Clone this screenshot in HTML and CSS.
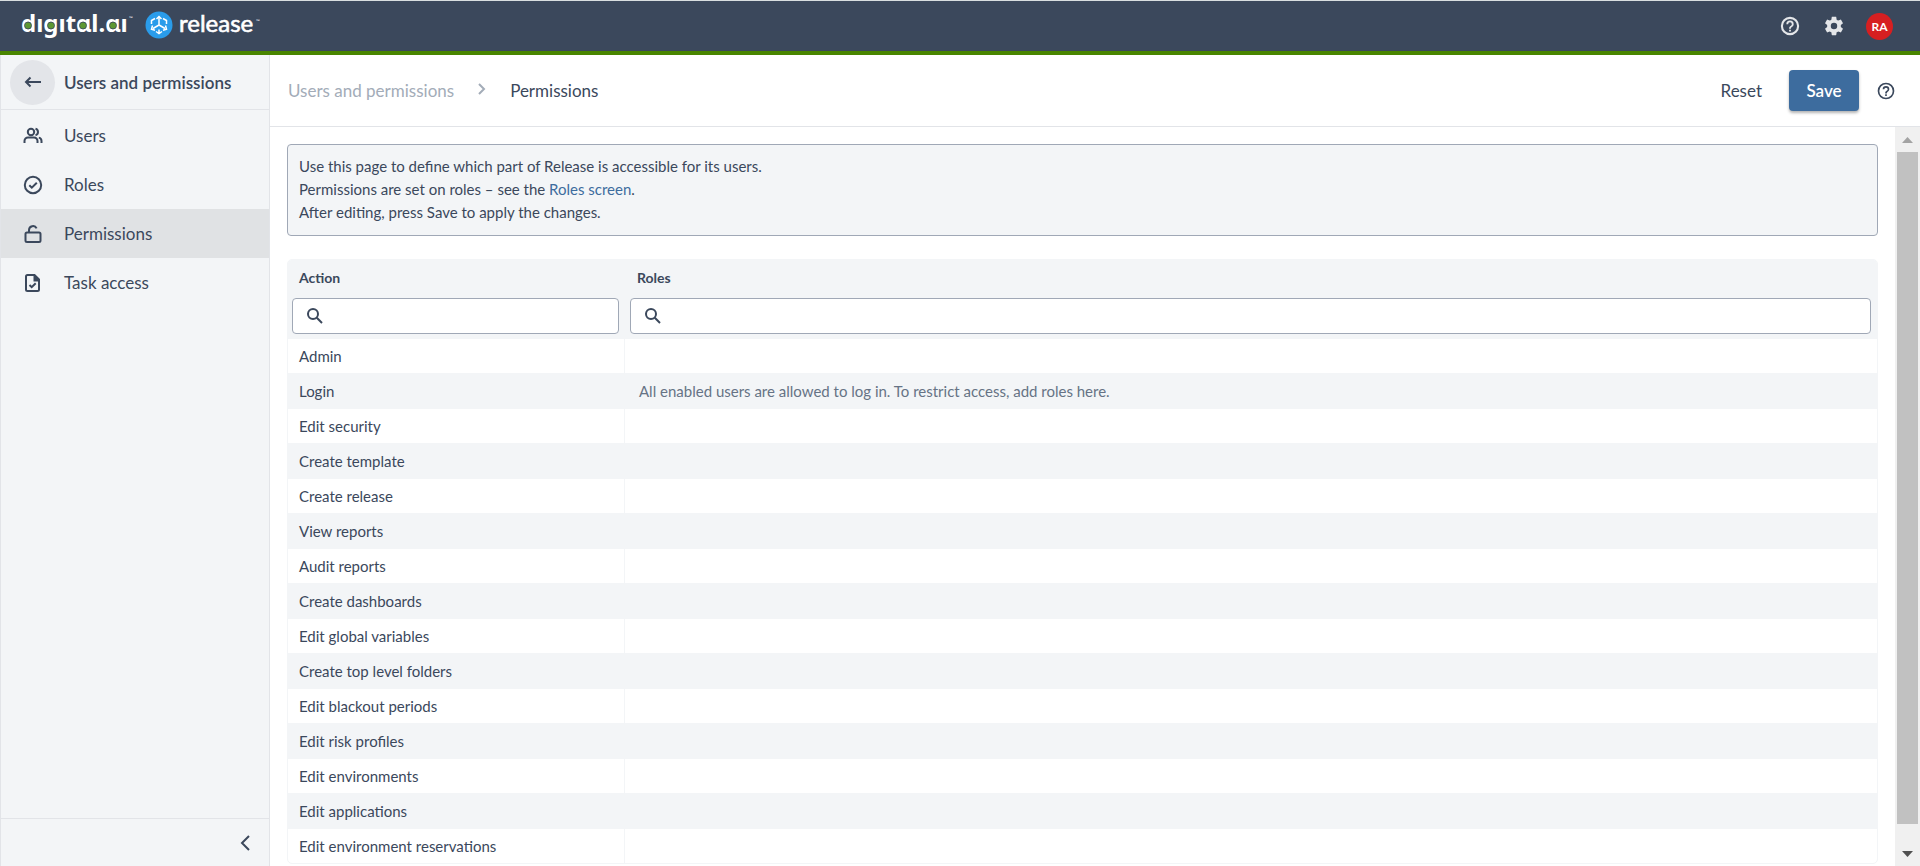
FILE: index.html
```
<!DOCTYPE html>
<html lang="en">
<head>
<meta charset="utf-8">
<title>Permissions - Digital.ai Release</title>
<link rel="stylesheet" href="styles.css">
</head>
<body>
<header class="topbar">
  <a class="brand" href="#" aria-label="digital.ai release">
    <svg class="brand-logo" width="244" height="36" viewBox="0 0 244 36">
      <text class="logo-digital" x="1" y="24">dıgıtɑl.ɑı</text>
      <g class="logo-eyes"><circle cx="8" cy="17.500" r="3.500"/><circle cx="31" cy="17.500" r="3.500"/><circle cx="63" cy="17.500" r="3.500"/><circle cx="93" cy="17.500" r="3.500"/></g>
      <text class="logo-tm" x="109" y="12">™</text>
      <circle class="logo-disc" cx="139" cy="17" r="13.500"/>
      <g class="logo-cube">
        <path d="M139 17V9M139 17l-6 3.500M139 17l6 3.500"/>
        <path d="M136.500 11l2.500-2.500 2.500 2.500M132.500 17.500l-1 3.800 3.500 1M145.500 17.500l1 3.800-3.500 1"/>
        <path d="M135 10.500l-3.500 2v3.500M143 10.500l3.500 2v3.500M136 23.500l3 2 3-2M139 21.500v3.500"/>
      </g>
      <text class="logo-release" x="159" y="24">release</text>
      <text class="logo-tm" x="236" y="15">™</text>
    </svg>
  </a>
  <div class="topbar-actions">
    <button class="icon-button" aria-label="Help"><svg width="22" height="22" viewBox="0 0 24 24"><path d="M11 18h2v-2h-2v2zm1-16a10 10 0 1 0 0 20 10 10 0 0 0 0-20zm0 17.700a7.700 7.700 0 1 1 0-15.400 7.700 7.700 0 0 1 0 15.400zM12 6a4 4 0 0 0-4 4h2a2 2 0 1 1 4 0c0 2-3 1.750-3 5h2c0-2.250 3-2.500 3-5a4 4 0 0 0-4-4z"/></svg></button>
    <button class="icon-button" aria-label="Settings"><svg width="22" height="22" viewBox="0 0 24 24"><path d="M19.430 12.980c.04-.32.07-.64.07-.98s-.03-.66-.07-.98l2.110-1.650c.19-.15.24-.42.12-.64l-2-3.460c-.12-.22-.39-.3-.61-.22l-2.490 1c-.52-.4-1.080-.73-1.690-.98l-.38-2.650C14.460 2.180 14.250 2 14 2h-4c-.25 0-.46.18-.49.42l-.38 2.650c-.61.25-1.170.59-1.690.98l-2.490-1c-.23-.09-.49 0-.61.22l-2 3.460c-.13.22-.07.49.12.64l2.110 1.650c-.04.32-.07.65-.07.98s.03.66.07.98l-2.110 1.650c-.19.15-.24.42-.12.64l2 3.460c.12.22.39.3.61.22l2.490-1c.52.4 1.080.73 1.690.98l.38 2.650c.03.24.24.42.49.42h4c.25 0 .46-.18.49-.42l.38-2.650c.61-.25 1.170-.59 1.690-.98l2.490 1c.23.09.49 0 .61-.22l2-3.460c.12-.22.07-.49-.12-.64l-2.110-1.650zM12 15.500a3.500 3.500 0 1 1 0-7 3.500 3.500 0 0 1 0 7z"/></svg></button>
    <button class="avatar" aria-label="Account RA">RA</button>
  </div>
</header>
<div class="shell">
  <nav class="sidebar">
    <div class="sidebar-head">
      <button class="back" aria-label="Back"><svg width="18" height="14" viewBox="0 0 18 14"><path d="M17 7H2M6.500 2.500L2 7l4.500 4.500"/></svg></button>
      <span>Users and permissions</span>
    </div>
    <ul class="menu">
      <li><a href="#"><svg width="20" height="20" viewBox="0 0 20 20"><circle cx="8" cy="6" r="3.200"/><path d="M1.500 17v-2a3.500 3.500 0 0 1 3.500-3.500h6a3.500 3.500 0 0 1 3.500 3.500v2M12.500 2.800a3.300 3.300 0 0 1 0 6.400M15.800 11.600a3.500 3.500 0 0 1 2.700 3.400v2"/></svg>Users</a></li>
      <li><a href="#"><svg width="20" height="20" viewBox="0 0 20 20"><circle cx="10" cy="10" r="8.200"/><path d="M6.300 10.200l2.500 2.500 5-5"/></svg>Roles</a></li>
      <li><a class="current" href="#" aria-current="page"><svg width="20" height="20" viewBox="0 0 20 20"><rect x="2.500" y="8.500" width="15" height="9.500" rx="1.500"/><path d="M6 8.500V6a4 4 0 0 1 7.600-1.600"/></svg>Permissions</a></li>
      <li><a href="#"><svg width="20" height="20" viewBox="0 0 20 20"><path d="M11.500 2H4.500A1.500 1.500 0 0 0 3 3.500v13A1.500 1.500 0 0 0 4.500 18h10a1.500 1.500 0 0 0 1.500-1.500V6.500zM6.500 12l2.200 2.200 4-4"/><path class="solid" d="M10.500 2h1.500l4 4.500v2h-5.500z"/></svg>Task access</a></li>
    </ul>
    <div class="sidebar-foot">
      <button class="collapse" aria-label="Collapse menu"><svg width="12" height="18" viewBox="0 0 12 18"><path d="M10 2L3 9l7 7"/></svg></button>
    </div>
  </nav>
  <main class="main">
    <div class="page-head">
      <div class="crumbs">
        <a href="#">Users and permissions</a>
        <svg width="8" height="12" viewBox="0 0 8 12"><path d="M1 1l5 5-5 5"/></svg>
        <span>Permissions</span>
      </div>
      <div class="page-actions">
        <button class="reset">Reset</button>
        <button class="save">Save</button>
        <button class="icon-button dark" aria-label="Page help"><svg width="20" height="20" viewBox="0 0 24 24"><path d="M11 18h2v-2h-2v2zm1-16a10 10 0 1 0 0 20 10 10 0 0 0 0-20zm0 18a8 8 0 1 1 0-16 8 8 0 0 1 0 16zM12 6a4 4 0 0 0-4 4h2a2 2 0 1 1 4 0c0 2-3 1.750-3 5h2c0-2.250 3-2.500 3-5a4 4 0 0 0-4-4z"/></svg></button>
      </div>
    </div>
    <div class="viewport">
      <div class="content">
        <p class="notice">Use this page to define which part of Release is accessible for its users.<br>Permissions are set on roles – see the <a href="#">Roles screen</a>.<br>After editing, press Save to apply the changes.</p>
        <table class="grid">
          <colgroup><col class="col-action"><col></colgroup>
          <thead>
            <tr><th scope="col"><label for="f-action">Action</label></th><th scope="col"><label for="f-roles">Roles</label></th></tr>
            <tr class="filters">
              <td><div class="search"><svg width="18" height="18" viewBox="0 0 18 18"><circle cx="7" cy="7" r="5"/><path d="M10.800 10.800l5.200 5.200"/></svg><input id="f-action" type="text"></div></td>
              <td><div class="search"><svg width="18" height="18" viewBox="0 0 18 18"><circle cx="7" cy="7" r="5"/><path d="M10.800 10.800l5.200 5.200"/></svg><input id="f-roles" type="text"></div></td>
            </tr>
          </thead>
          <tbody>
            <tr><td>Admin</td><td></td></tr>
            <tr><td>Login</td><td class="hint">All enabled users are allowed to log in. To restrict access, add roles here.</td></tr>
            <tr><td>Edit security</td><td></td></tr>
            <tr><td>Create template</td><td></td></tr>
            <tr><td>Create release</td><td></td></tr>
            <tr><td>View reports</td><td></td></tr>
            <tr><td>Audit reports</td><td></td></tr>
            <tr><td>Create dashboards</td><td></td></tr>
            <tr><td>Edit global variables</td><td></td></tr>
            <tr><td>Create top level folders</td><td></td></tr>
            <tr><td>Edit blackout periods</td><td></td></tr>
            <tr><td>Edit risk profiles</td><td></td></tr>
            <tr><td>Edit environments</td><td></td></tr>
            <tr><td>Edit applications</td><td></td></tr>
            <tr><td>Edit environment reservations</td><td></td></tr>
          </tbody>
        </table>
      </div>
      <div class="scrollbar" aria-hidden="true">
        <svg class="arrow-up" width="25" height="25" viewBox="0 0 25 25"><path d="M7 16l5.500-6 5.500 6z"/></svg>
        <div class="thumb"></div>
        <svg class="arrow-down" width="25" height="25" viewBox="0 0 25 25"><path d="M7 10l5.500 6 5.500-6z"/></svg>
      </div>
    </div>
  </main>
</div>
</body>
</html>
```
FILE: styles.css
```
* { box-sizing: border-box; }
body {
  margin: 0;
  height: 100vh;
  display: flex;
  flex-direction: column;
  overflow: hidden;
  font: 15px/23px Lato, "Liberation Sans", sans-serif;
  color: #3b485c;
  background: #fff;
}
a { color: inherit; text-decoration: none; }
button { font: inherit; color: inherit; border: 0; background: none; padding: 0; cursor: pointer; }
svg { display: block; flex: none; }

.topbar {
  flex: none;
  height: 55px;
  display: flex;
  align-items: center;
  justify-content: space-between;
  padding: 0 27px 0 20px;
  background: #3b485c;
  border-top: 1px solid #d9dee0;
  border-bottom: 4px solid #498500;
}
.brand-logo { overflow: visible; }
.logo-digital { font-family: "Noto Sans", sans-serif; font-size: 24px; font-weight: 700; fill: #fff; }
.logo-eyes { fill: #5d9732; stroke: #3b485c; stroke-width: 0.8; }
.logo-release { font-size: 24px; font-weight: 400; fill: #fff; stroke: #fff; stroke-width: 0.6; }
.logo-tm { font-size: 5px; fill: #fff; }
.logo-disc { fill: #2a9cea; }
.logo-cube { fill: none; stroke: #fff; stroke-width: 1.5; }
.topbar-actions { display: flex; align-items: center; gap: 20px; }
.icon-button { display: grid; place-items: center; width: 24px; fill: #e4e6e9; }
.icon-button.dark { fill: #3b485c; }
.avatar {
  width: 27px;
  height: 27px;
  border-radius: 50%;
  background: #d61f21;
  color: #fff;
  font-size: 12px;
  font-weight: 700;
  line-height: 27px;
}

.shell { flex: 1; min-height: 0; display: flex; }
.sidebar {
  flex: none;
  width: 270px;
  display: flex;
  flex-direction: column;
  background: #f3f5f7;
  border: solid #e2e4e8;
  border-width: 0 1px;
  font-size: 17px;
}
.sidebar-head {
  display: flex;
  align-items: center;
  gap: 9px;
  height: 55px;
  padding-left: 9px;
  border-bottom: 1px solid #e2e4e8;
  font-weight: 600;
}
.back {
  width: 45px;
  height: 45px;
  display: grid;
  place-items: center;
  border-radius: 50%;
  background: #e3e5e9;
}
.back svg, .menu svg, .collapse svg, .search svg, .crumbs svg {
  fill: none;
  stroke: #3b485c;
  stroke-width: 2;
}
.menu { flex: 1; margin: 0; padding: 1px 0 0; list-style: none; }
.menu a {
  display: flex;
  align-items: center;
  gap: 21px;
  height: 49px;
  padding-left: 22px;
}
.menu .solid { fill: #3b485c; stroke: none; }
.menu .current { background: #e0e2e4; }
.sidebar-foot {
  display: flex;
  justify-content: flex-end;
  height: 48px;
  padding-right: 18px;
  border-top: 1px solid #e2e4e8;
}

.main { flex: 1; min-width: 0; display: flex; flex-direction: column; }
.page-head {
  flex: none;
  display: flex;
  align-items: center;
  justify-content: space-between;
  height: 72px;
  padding: 0 22px 0 18px;
  border-bottom: 1px solid #e2e4e8;
  font-size: 17px;
}
.crumbs { display: flex; align-items: center; gap: 24px; }
.crumbs a { color: #a3acb8; }
.crumbs svg { stroke: #a3acb8; margin-bottom: 4px; }
.page-actions { display: flex; align-items: center; }
.reset { margin-right: 27px; }
.save {
  width: 70px;
  height: 41px;
  margin-right: 15px;
  border-radius: 4px;
  background: #3d6c9e;
  color: #fff;
  font-weight: 600;
  box-shadow: 0 2px 3px rgba(0, 0, 0, 0.3);
}
.viewport { flex: 1; min-height: 0; display: flex; }
.content { flex: 1; min-width: 0; padding: 17px 17px 0; overflow: hidden; }
.notice {
  margin: 0 0 23px;
  padding: 10px 11px 11px;
  border: 1px solid #a0a8b6;
  border-radius: 4px;
  background: #f3f5f7;
}
.notice a { color: #3d6c9e; }

.grid {
  width: 100%;
  table-layout: fixed;
  border-collapse: separate;
  border-spacing: 0;
  border: 1px solid #f3f5f7;
  border-radius: 5px;
  overflow: hidden;
}
.col-action { width: 336px; }
.grid th { height: 38px; padding: 0 11px 4px; text-align: left; font-size: 14px; font-weight: 700; }
.grid th + th { padding-left: 13px; }
.grid thead { background: #f3f5f7; }
.filters td { padding: 0 5px 5px 4px; }
.filters td + td { padding: 0 6px 5px; }
.search {
  display: flex;
  align-items: center;
  gap: 8px;
  height: 36px;
  padding: 0 8px 0 13px;
  border: 1px solid #a0a8b6;
  border-radius: 4px;
  background: #fff;
}
.search input { flex: 1; min-width: 0; border: 0; outline: 0; background: none; font: inherit; color: inherit; }
.grid tbody td { height: 34px; padding: 0 11px; }
.grid tbody td + td { border-left: 1px solid #f3f5f7; padding-left: 14px; }
.grid tbody tr:nth-child(even) td { height: 36px; background: #f3f5f7; }
.grid .hint { color: #667385; }

.scrollbar {
  flex: none;
  width: 25px;
  display: flex;
  flex-direction: column;
  background: #f0f0f0;
}
.thumb { flex: 1; margin: 0 2px 17px; background: #c1c1c1; }
.arrow-up { fill: #a3a3a3; }
.arrow-down { fill: #505050; }
```
